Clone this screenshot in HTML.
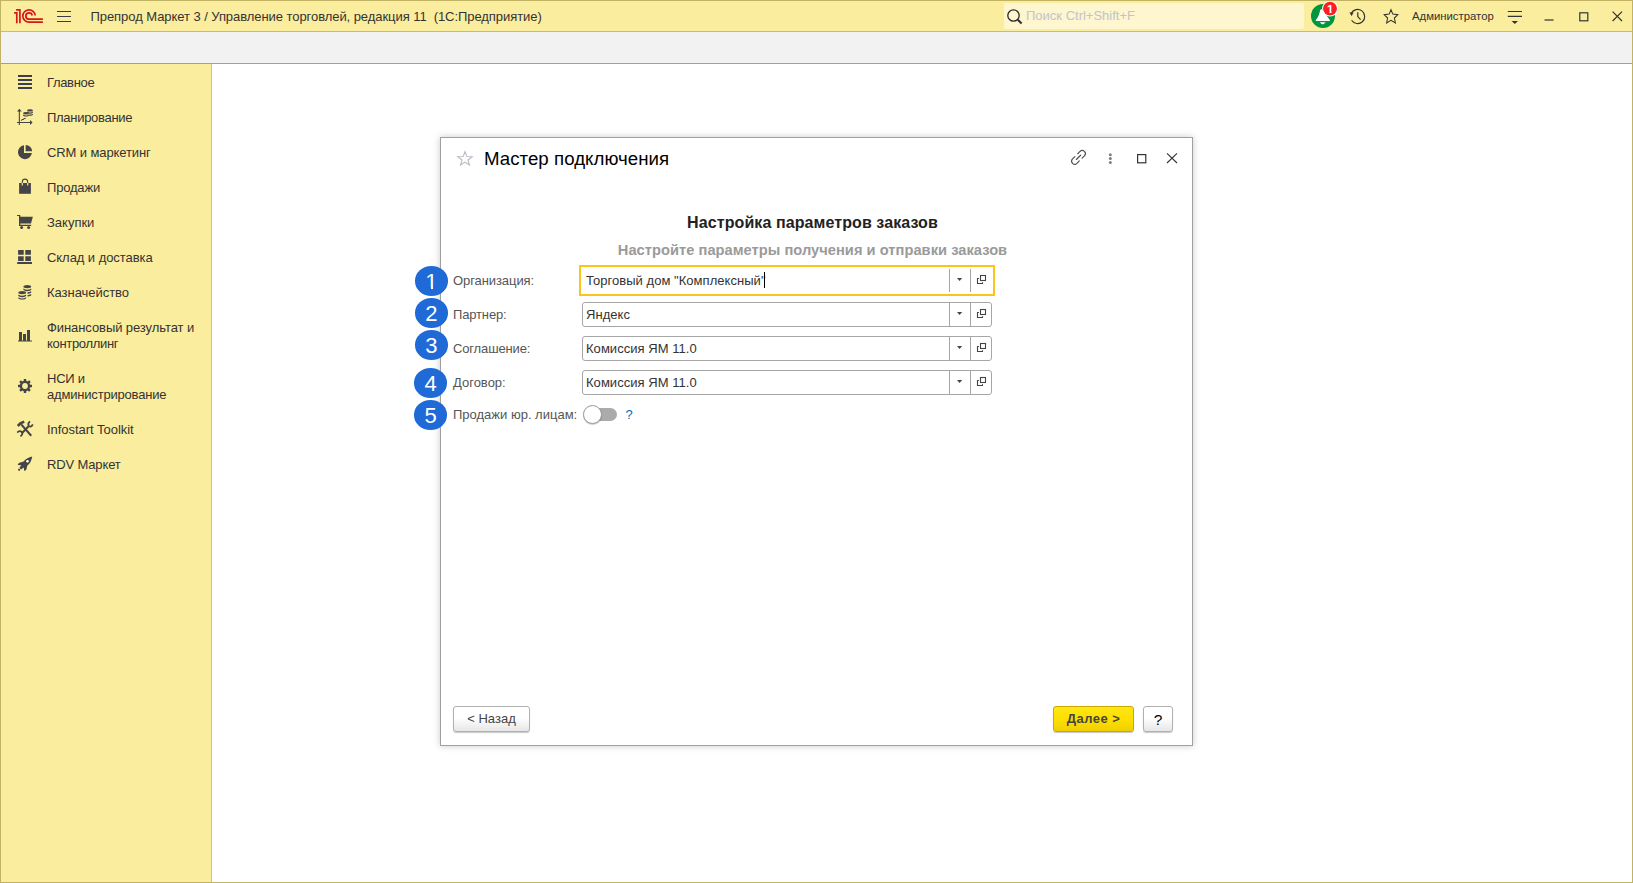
<!DOCTYPE html>
<html lang="ru">
<head>
<meta charset="utf-8">
<title>Мастер подключения</title>
<style>
*{box-sizing:border-box;margin:0;padding:0}
html,body{width:1633px;height:883px;overflow:hidden;background:#fff}
body{font-family:"Liberation Sans",Arial,sans-serif;font-size:13px;color:#333;position:relative}
svg{position:absolute;overflow:visible;display:block}
#frame{position:absolute;left:0;top:0;width:1633px;height:883px;border:1px solid #c2b364;pointer-events:none;z-index:50}
#titlebar{position:absolute;left:0;top:0;width:1633px;height:31px;background:#fbed9e}
#titleline{position:absolute;left:0;top:31px;width:1633px;height:1px;background:#cbbb6c}
#toolstrip{position:absolute;left:0;top:32px;width:1633px;height:31px;background:#f2f2f2}
#stripline{position:absolute;left:0;top:63px;width:1633px;height:1px;background:#9e9e9e}
#sidebar{position:absolute;left:0;top:64px;width:211px;height:819px;background:#fbed9e}
#sideline{position:absolute;left:211px;top:64px;width:1px;height:819px;background:#cfc27e}
.abs{position:absolute;white-space:nowrap}
#apptitle{left:90.5px;top:9px;font-size:13px;line-height:15px;color:#333;letter-spacing:-0.06px}
#search{position:absolute;left:1004px;top:3px;width:300px;height:26px;background:#fdf6cf;border-radius:2px}
#search span{position:absolute;left:22px;top:5px;font-size:13px;line-height:16px;color:#c3c3cb;white-space:nowrap}
#user{left:1412px;top:9px;font-size:11.33px;line-height:14px;color:#333}
.nav{position:absolute;left:47px;font-size:13px;line-height:16px;color:#333;white-space:nowrap;letter-spacing:-0.1px}
.ico{left:17px;width:16px;height:16px}
.ico *{fill:#454547}

#dialog{position:absolute;left:440px;top:137px;width:753px;height:609px;background:#fff;border:1px solid #a0a0a0;box-shadow:0 0 7px rgba(0,0,0,.21)}
#dlgtitle{left:484px;top:147px;font-size:18.67px;line-height:24px;color:#000;letter-spacing:0.04px}
#h1{left:441px;top:213px;width:743px;text-align:center;font-size:16px;line-height:20px;font-weight:bold;color:#222;letter-spacing:0.09px}
#h2{left:441px;top:241px;width:743px;text-align:center;font-size:14.67px;line-height:18px;font-weight:bold;color:#9a9a9a;letter-spacing:0.03px}
.lbl{position:absolute;left:453px;font-size:13px;line-height:16px;color:#555;white-space:nowrap;letter-spacing:-0.15px}
.fld{position:absolute;left:582px;width:410px;height:25px;border:1px solid #a6a6a6;border-radius:3px;background:#fff}
.fld .txt{position:absolute;left:3px;top:4px;font-size:13px;line-height:16px;color:#333;white-space:nowrap;letter-spacing:0.04px}
.fld .s1,.fld .s2{position:absolute;top:0;width:1px;height:23px;background:#a6a6a6}
.fld .s1{left:366px}.fld .s2{left:387px}
.fld .dd{left:373.9px;top:9px;width:6px;height:4px}
.fld .op{left:394px;top:6px;width:10px;height:10px}
.fld.focus{border-color:transparent}
.fld.focus .s1,.fld.focus .s2{top:0;height:23px}
#focusring{position:absolute;left:579px;top:265px;width:416px;height:31px;border:2px solid #fcc419}
.badge{position:absolute;left:414.5px;width:33.5px;height:30.2px;border-radius:50%;background:#1f6ad6;color:#fff;font-size:22px;line-height:32px;text-align:center;z-index:5}
.foot{position:absolute;top:286.5px;width:6px;height:3px;background:#1f6ad6;z-index:6}
.btn{position:absolute;top:706px;height:26px;border:1px solid #b0b0b0;border-radius:3px;background:linear-gradient(#fff 0%,#fff 45%,#e6e6e6 100%);box-shadow:0 1px 1px rgba(0,0,0,.22);font-size:13px;line-height:24px;text-align:center;color:#444;white-space:nowrap}
#next{background:linear-gradient(#ffe514 0%,#fde000 50%,#f0cf00 100%);border-color:#c9a800;font-weight:bold;color:#444;letter-spacing:0.45px}
</style>
</head>
<body>
<div id="titlebar"></div>
<div id="titleline"></div>
<div id="toolstrip"></div>
<div id="stripline"></div>
<div id="sidebar"></div>
<div id="sideline"></div>

<!-- 1C logo -->
<svg id="logo" style="left:14px;top:9px;width:30px;height:15px" viewBox="0 0 30 15" fill="none" stroke="#d9161c" stroke-width="1.7">
<path d="M2.1 0.85 H5.9 V14.2 M0.1 3.9 H2.8 V14.2" />
<path d="M21.2 6.5 A6.2 6.2 0 1 0 15 13.2 H28.9" />
<path d="M18.2 6.5 A3.2 3.2 0 1 0 15 10.2 H28.9" />
</svg>
<!-- hamburger -->
<svg style="left:57px;top:11px;width:14px;height:11px" viewBox="0 0 14 11"><path d="M0 0.5H14M0 5.5H14M0 10.5H14" stroke="#3a3c48" stroke-width="1.1"/></svg>

<div id="apptitle" class="abs">Препрод Маркет 3 / Управление торговлей, редакция 11&nbsp; (1С:Предприятие)</div>

<div id="search"><svg style="left:3px;top:6px;width:16px;height:16px" viewBox="0 0 16 16" fill="none" stroke="#2b2b2b"><circle cx="6.5" cy="6.5" r="5.7" stroke-width="1.3"/><path d="M10.8 10.8L14.6 14.4" stroke-width="2"/></svg><span>Поиск Ctrl+Shift+F</span></div>

<!-- bell -->
<svg style="left:1311px;top:1px;width:28px;height:28px" viewBox="0 0 28 28">
<circle cx="12" cy="15" r="12" fill="#00953f"/>
<path d="M9.2 9 Q10.4 7.6 11.6 9 L18.8 19 V19.9 H4.8 V19 Q8 15.4 9.2 9 Z" fill="#fff"/>
<path d="M8.6 21.3 H14.8 L12.4 23.2 H11 Z" fill="#fff"/>
<circle cx="19" cy="7.6" r="7.9" fill="#fff"/>
<circle cx="19" cy="7.6" r="6.9" fill="#fb1f24"/>
<text x="19.3" y="11.7" style="font-family:'Liberation Sans',sans-serif;font-size:11.5px;font-weight:bold" fill="#fff" text-anchor="middle">1</text>
<path d="M14.6 9.9H18.45V12.2H14.6Z M20.55 9.9H24V12.2H20.55Z" fill="#fb1f24"/>
</svg>
<!-- history -->
<svg style="left:1349px;top:8px;width:18px;height:18px" viewBox="0 0 18 18" fill="none" stroke="#333" stroke-width="1.2">
<path d="M2.3 5.2 A7.1 7.1 0 1 1 2.6 12.3"/>
<path d="M8.8 4.2 V8.6 L11.6 11.6"/>
<path d="M0.4 4.6 L4.6 4.4 L2.6 8 Z" fill="#333" stroke="none"/>
</svg>
<!-- star -->
<svg style="left:1383px;top:8px;width:16px;height:16px" viewBox="0 0 16 16" fill="none" stroke="#333" stroke-width="1.05" stroke-linejoin="miter">
<path d="M8 1.7 L9.8 6.1 L14.8 6.7 L11.4 10 L12.4 15 L8 12.4 L3.6 15 L4.6 10 L1.2 6.7 L6.2 6.1 Z"/>
</svg>
<div id="user" class="abs">Администратор</div>
<!-- filter menu -->
<svg style="left:1507px;top:10px;width:16px;height:15px" viewBox="0 0 16 15"><path d="M0.8 1.5H15M0.8 6.4H15" stroke="#333" stroke-width="1.1"/><path d="M4.6 11.1H11L7.8 14.1Z" fill="#333"/></svg>
<!-- window controls -->
<svg style="left:1544px;top:19px;width:10px;height:2px" viewBox="0 0 10 2"><path d="M0.5 1H9.6" stroke="#333" stroke-width="1.2"/></svg>
<svg style="left:1579px;top:12px;width:10px;height:10px" viewBox="0 0 10 10"><rect x="0.8" y="0.8" width="8" height="8" fill="none" stroke="#333" stroke-width="1.2"/></svg>
<svg style="left:1612px;top:11px;width:11px;height:11px" viewBox="0 0 11 11"><path d="M0.6 0.6L10 10M10 0.6L0.6 10" stroke="#333" stroke-width="1.2"/></svg>

<!-- sidebar icons -->
<svg class="ico" style="top:74px" viewBox="0 0 16 16"><path style="fill:#3b3e4e" d="M1 1h14v2H1zM1 5h14v2H1zM1 9h14v2H1zM1 13h14v2H1z"/></svg>
<svg class="ico" style="top:108px" viewBox="0 0 16 16">
<path d="M1.8 3.6 V17 H2.9 V3.6 H4.8 L2.35 0.8 L0 3.6 Z"/>
<path d="M0 14 H13 V12.1 L15.6 14.5 L13 16.9 V15 H0 Z"/>
<path d="M3.8 12.6 L5 11 H6.2 L7 10 H8.6 V10.9 H7.4 L6.6 11.9 H5.4 L4.5 13.1Z"/>
<ellipse cx="13" cy="2.4" rx="2.9" ry="1.2"/><path d="M10.1 3.6 Q13 5.4 15.9 3.6 V4.8 Q13 6.6 10.1 4.8Z M11.8 6.4 Q13.5 7 15.9 5.7 V6.9 Q13.5 8.2 11.8 7.6Z"/>
<ellipse cx="9" cy="5.3" rx="2.9" ry="1.2"/><path d="M6.1 6.5 Q9 8.3 11.9 6.5 V7.7 Q9 9.5 6.1 7.7Z"/>
</svg>
<svg class="ico" style="top:144px" viewBox="0 0 16 16">
<path d="M7 1.2 A7 7 0 1 0 14.9 9 H7 Z"/>
<path d="M8.6 0.9 A6.6 6.6 0 0 1 15.1 7.3 H8.6 Z"/>
</svg>
<svg class="ico" style="top:178px" viewBox="0 0 16 16">
<path d="M2.1 5 H13.9 V15.8 H2.1 Z"/>
<path d="M5.3 7.6 V4 A2.7 2.9 0 0 1 10.7 4 V7.6" fill="none" stroke="#454547" stroke-width="1.1" style="fill:none"/>
<path d="M5.3 5 V7.4 M10.7 5 V7.4" stroke="#fbed9e" stroke-width="1.2" style="fill:none"/>
</svg>
<svg class="ico" style="top:214px" viewBox="0 0 16 16">
<path d="M0 0.9 H3.3 V11.9 H2 V2.1 H0 Z M3.3 2.7 H15.9 L14 9.5 H3.3 Z M2 10.7 H14.2 V11.9 H2 Z"/>
<circle cx="4.6" cy="13.6" r="1.5"/><circle cx="11.6" cy="13.6" r="1.5"/>
</svg>
<svg class="ico" style="top:249px" viewBox="0 0 16 16">
<path d="M1.1 1.1h5.6v4.6H1.1zM8.3 1.1h5.6v4.6H8.3zM1.1 7.2h5.6v4.7H1.1zM8.3 7.2h5.6v4.7H8.3zM0.2 13h14.8v2H0.2z"/>
</svg>
<svg class="ico" style="top:284px" viewBox="0 0 16 16">
<ellipse cx="10.3" cy="2.6" rx="3.9" ry="1.7"/>
<path d="M6.4 4.4 Q10.3 7 14.2 4.4 V6 Q10.3 8.4 6.4 6 Z M10.6 8.2 Q12.4 8.2 14.2 7.2 V8.8 Q12.4 9.8 10.6 9.9Z M10.6 11 Q12.4 11 14.2 10 V11.4 Q12.4 12.4 10.6 12.5Z"/>
<ellipse cx="5.2" cy="8.6" rx="3.9" ry="1.7"/>
<path d="M1.3 10.4 Q5.2 13 9.1 10.4 V12 Q5.2 14.4 1.3 12 Z M1.3 13.2 Q5.2 15.8 9.1 13.2 V14.4 Q5.2 16.8 1.3 14.4 Z"/>
</svg>
<svg class="ico" style="top:327px" viewBox="0 0 16 16">
<path d="M2 5h3v9H2zM6 7h3v7H6zM10 3h3v11h-3zM1 13.4h14v1.1H1z"/>
</svg>
<svg class="ico" style="top:378px" viewBox="0 0 16 16">
<path fill-rule="evenodd" d="M6.74 2.85 L6.80 1.00 L9.20 1.00 L9.26 2.85 L10.75 3.47 L12.10 2.20 L13.80 3.90 L12.53 5.25 L13.15 6.74 L15.00 6.80 L15.00 9.20 L13.15 9.26 L12.53 10.75 L13.80 12.10 L12.10 13.80 L10.75 12.53 L9.26 13.15 L9.20 15.00 L6.80 15.00 L6.74 13.15 L5.25 12.53 L3.90 13.80 L2.20 12.10 L3.47 10.75 L2.85 9.26 L1.00 9.20 L1.00 6.80 L2.85 6.74 L3.47 5.25 L2.20 3.90 L3.90 2.20 L5.25 3.47Z M8 5.1 a2.9 2.9 0 1 0 0 5.8 a2.9 2.9 0 1 0 0 -5.8Z"/>
</svg>
<svg class="ico" style="top:421px" viewBox="0 0 16 16">
<g style="fill:none;stroke:#454547" stroke-linecap="butt">
<path d="M4.2 3.4 L14.2 14.8" stroke-width="2.1" style="fill:none"/>
<path d="M0.8 5 L3.4 2.4 L7.2 0.6" stroke-width="2.6" style="fill:none"/>
<path d="M4.6 12.4 L11.6 5.2" stroke-width="2.1" style="fill:none"/>
<path d="M13 0.4 Q10.2 2.6 11.9 4.9 Q14.2 6.8 15.8 3.4" stroke-width="1.7" style="fill:none"/>
<path d="M0.3 11.6 Q2.6 8.8 4.9 11.2 Q6.4 13.2 3.4 15.4" stroke-width="1.7" style="fill:none"/>
</g>
</svg>
<svg class="ico" style="top:456px" viewBox="0 0 16 16">
<path d="M15.2 0.4 Q9.4 1.6 6.6 5.6 L1.8 7 L0.6 9 L4.2 9.2 L2.4 12 L4 13.4 L6.8 11.6 L7.2 15 L9.2 14 L10.4 9.4 Q14.4 6.4 15.2 0.4 Z"/>
<circle cx="10.5" cy="5.3" r="1.3" style="fill:#fff"/>
<path d="M1.4 12.4 L3.2 13.2 L2.6 15 L1 14.6 Z"/>
</svg>

<div class="nav" style="top:75px;letter-spacing:-0.34px">Главное</div>
<div class="nav" style="top:110px;letter-spacing:-0.29px">Планирование</div>
<div class="nav" style="top:145px">CRM и маркетинг</div>
<div class="nav" style="top:180px;letter-spacing:-0.19px">Продажи</div>
<div class="nav" style="top:215px;letter-spacing:-0.01px">Закупки</div>
<div class="nav" style="top:250px;letter-spacing:-0.06px">Склад и доставка</div>
<div class="nav" style="top:285px;letter-spacing:-0.04px">Казначейство</div>
<div class="nav" style="top:320px;letter-spacing:-0.08px">Финансовый результат и<br><span style="letter-spacing:-0.32px">контроллинг</span></div>
<div class="nav" style="top:371px;letter-spacing:-0.26px">НСИ и<br><span style="letter-spacing:-0.19px">администрирование</span></div>
<div class="nav" style="top:422px;letter-spacing:-0.03px">Infostart Toolkit</div>
<div class="nav" style="top:457px;letter-spacing:-0.15px">RDV Маркет</div>

<!-- dialog -->
<div id="dialog"></div>
<svg style="left:456px;top:150px;width:18px;height:17px" viewBox="0 0 18 17" fill="none" stroke="#b4bcc4" stroke-width="1.1">
<path d="M9.00 1.62 L10.84 6.58 L16.18 6.77 L11.94 9.99 L13.42 15.05 L9.00 12.10 L4.58 15.05 L6.06 9.99 L1.82 6.77 L7.16 6.58 Z"/>
</svg>
<div id="dlgtitle" class="abs">Мастер подключения</div>
<!-- link icon -->
<svg style="left:1070px;top:149px;width:17px;height:17px" viewBox="0 0 17 17" fill="none" stroke="#505050" stroke-width="1.15" stroke-linecap="round">
<g transform="translate(8.5 8.35) rotate(-45)">
<path d="M2 -3.1 H5.3 A3.1 3.1 0 0 1 5.3 3.1 H2"/>
<path d="M-2 3.1 H-5.3 A3.1 3.1 0 0 1 -5.3 -3.1 H-2"/>
<path d="M-3 0 H3"/>
</g>
</svg>
<svg style="left:1108px;top:153px;width:4px;height:12px" viewBox="0 0 4 12" fill="#808080"><circle cx="2.3" cy="1.7" r="1.5"/><circle cx="2.3" cy="5.6" r="1.5"/><circle cx="2.3" cy="9.6" r="1.5"/></svg>
<svg style="left:1137px;top:154px;width:10px;height:10px" viewBox="0 0 10 10"><rect x="0.6" y="0.6" width="8.2" height="8.2" fill="none" stroke="#333" stroke-width="1.2"/></svg>
<svg style="left:1166px;top:153px;width:12px;height:11px" viewBox="0 0 12 11"><path d="M1 0.4L11 10M11 0.4L1 10" stroke="#333" stroke-width="1.1"/></svg>

<div id="h1" class="abs">Настройка параметров заказов</div>
<div id="h2" class="abs">Настройте параметры получения и отправки заказов</div>

<div class="lbl" style="top:273px;letter-spacing:-0.08px">Организация:</div>
<div class="lbl" style="top:307px">Партнер:</div>
<div class="lbl" style="top:341px">Соглашение:</div>
<div class="lbl" style="top:375px;letter-spacing:0">Договор:</div>
<div class="lbl" style="top:407px;letter-spacing:0">Продажи юр. лицам:</div>

<div id="focusring"></div>
<div class="fld focus" style="top:268px"><span class="txt">Торговый дом "Комплексный"</span><i class="s1"></i><i class="s2"></i><svg class="dd" viewBox="0 0 6 4"><path d="M0 0H5.2L2.6 3.1Z" fill="#444"/></svg><svg class="op" viewBox="0 0 10 10" fill="none" stroke="#444" stroke-width="1.1"><rect x="3.5" y="0.5" width="5" height="5"/><path d="M1.9 3.5H0.5V8.5H5.5V7.2"/></svg></div>
<div class="fld" style="top:302px"><span class="txt">Яндекс</span><i class="s1"></i><i class="s2"></i><svg class="dd" viewBox="0 0 6 4"><path d="M0 0H5.2L2.6 3.1Z" fill="#444"/></svg><svg class="op" viewBox="0 0 10 10" fill="none" stroke="#444" stroke-width="1.1"><rect x="3.5" y="0.5" width="5" height="5"/><path d="M1.9 3.5H0.5V8.5H5.5V7.2"/></svg></div>
<div class="fld" style="top:336px"><span class="txt">Комиссия ЯМ 11.0</span><i class="s1"></i><i class="s2"></i><svg class="dd" viewBox="0 0 6 4"><path d="M0 0H5.2L2.6 3.1Z" fill="#444"/></svg><svg class="op" viewBox="0 0 10 10" fill="none" stroke="#444" stroke-width="1.1"><rect x="3.5" y="0.5" width="5" height="5"/><path d="M1.9 3.5H0.5V8.5H5.5V7.2"/></svg></div>
<div class="fld" style="top:370px"><span class="txt">Комиссия ЯМ 11.0</span><i class="s1"></i><i class="s2"></i><svg class="dd" viewBox="0 0 6 4"><path d="M0 0H5.2L2.6 3.1Z" fill="#444"/></svg><svg class="op" viewBox="0 0 10 10" fill="none" stroke="#444" stroke-width="1.1"><rect x="3.5" y="0.5" width="5" height="5"/><path d="M1.9 3.5H0.5V8.5H5.5V7.2"/></svg></div>
<div class="abs" style="left:764px;top:272px;width:1px;height:16px;background:#000"></div>
<!-- toggle -->
<div class="abs" style="left:586px;top:408px;width:31px;height:13px;border-radius:7px;background:#ababab"></div>
<div class="abs" style="left:583px;top:405px;width:19px;height:19px;border-radius:50%;background:#fff;border:1px solid #9a9a9a;box-shadow:0 1px 1px rgba(0,0,0,.2)"></div>
<div class="abs" style="left:625.5px;top:407px;font-size:13px;line-height:16px;color:#0b6ab0">?</div>

<div class="badge" style="top:265.7px">1</div><i class="foot" style="left:425px"></i><i class="foot" style="left:433px"></i>
<div class="badge" style="top:298px">2</div>
<div class="badge" style="top:330.3px">3</div>
<div class="badge" style="top:368px;left:413.9px">4</div>
<div class="badge" style="top:400.2px;left:413.9px">5</div>

<div class="btn" style="left:453px;width:77px">&lt; Назад</div>
<div class="btn" id="next" style="left:1053px;width:81px">Далее &gt;</div>
<div class="btn" style="left:1143px;width:30px;font-size:15.5px;color:#000;line-height:25px">?</div>

<div id="frame"></div>
</body>
</html>
